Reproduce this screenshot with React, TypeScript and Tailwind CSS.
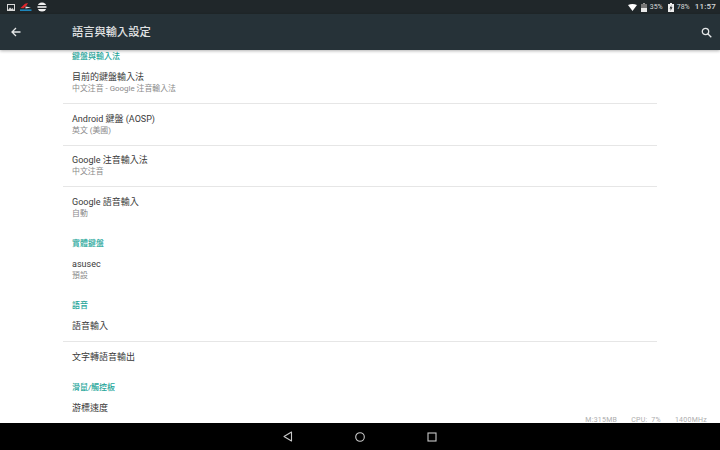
const cjk = { fontFamily: '"Roboto", "Noto Sans CJK TC", sans-serif' };

function Section({ text, first }: { text: string; first?: boolean }) {
  return (
    <div className={first ? "h-[12px] pt-[2px] px-[9px] flex items-center text-[8px] leading-[10px] font-medium text-[#26a69a]" : "h-[20px] pt-[10px] px-[9px] text-[8px] leading-[10px] font-medium text-[#26a69a]"}>
      {text}
    </div>
  );
}

function Row({ title, sub, divider, heightClass }: { title: string; sub?: string; divider?: boolean; heightClass?: string }) {
  return (
    <div className={divider ? "border-b border-[#e6e6e6]" : ""}>
      <div className={(heightClass ?? (sub ? "h-[41px]" : "h-[31px]")) + " px-[9px] flex flex-col justify-center gap-[2px]"}>
        <div className="text-[9px] leading-[10px] text-[#3a3a3a]">{title}</div>
        {sub && <div className="text-[7.9px] leading-[10px] text-[#8a8a8a]">{sub}</div>}
      </div>
    </div>
  );
}

export default function App() {
  return (
    <div style={cjk} className="relative w-[720px] h-[450px] overflow-hidden flex flex-col bg-white">
      <div className="h-[14px] shrink-0 bg-[#20272a] flex items-center justify-between pl-[7px] pr-[4px] text-[#d5d8d9]">
        <div className="flex items-center gap-[5px]">
          <svg width="8" height="7" viewBox="0 0 8 7">
            <rect x="0.5" y="0.5" width="7" height="6" fill="#20272a" stroke="#d8d8d8" />
            <path d="M1 6 L3 3.5 L4.5 5 L5.5 4 L7 6Z" fill="#d8d8d8" />
          </svg>
          <svg width="12" height="9" viewBox="0 0 12 9">
            <path d="M0.5 5 L5 0.8 L8 0 L6.5 2.4 L3.5 5.2Z" fill="#e0272d" />
            <path d="M5.5 3.5 L11 4.6 L5.5 5.4Z" fill="#e4e4e4" />
            <path d="M0 6.4 H11.5 V8 H0Z" fill="#1d86bb" />
          </svg>
          <svg width="10" height="10" viewBox="0 0 10 10">
            <circle cx="5" cy="5" r="4.6" fill="#f2f2f2" />
            <rect x="0" y="3" width="10" height="1.2" fill="#20272a" />
            <rect x="0" y="5.8" width="10" height="1.2" fill="#20272a" />
          </svg>
        </div>
        <div className="flex items-center text-[7px] leading-[10px]">
          <svg width="9" height="7" viewBox="0 0 9 7" className="mr-[4px]">
            <path d="M0 1 Q4.5 -1 9 1 L4.5 7Z" fill="#ffffff" />
          </svg>
          <svg width="6" height="9" viewBox="0 0 6 9" className="mr-[3px]">
            <rect x="2" y="0" width="2" height="1" fill="#999" />
            <rect x="0" y="1" width="6" height="8" fill="#777" />
            <rect x="0" y="5" width="6" height="4" fill="#e8e8e8" />
          </svg>
          <span className="mr-[5px]">35%</span>
          <svg width="6" height="9" viewBox="0 0 6 9" className="mr-[3px]">
            <rect x="2" y="0" width="2" height="1" fill="#eee" />
            <rect x="0" y="1" width="6" height="8" fill="#eee" />
            <path d="M3.5 2 L1.5 5.5 H2.8 L2.4 8 L4.5 4.2 H3.2Z" fill="#20272a" />
          </svg>
          <span className="mr-[5px]">78%</span>
          <span className="text-[8px] font-medium tracking-[0.2px]">11:57</span>
        </div>
      </div>

      <div className="relative z-10 h-[36px] shrink-0 bg-[#263238] flex items-center pl-[11px] pr-[8px] shadow-[0_1px_3px_rgba(0,0,0,0.3)]">
        <svg width="10" height="10" viewBox="0 0 10 10" fill="none" stroke="#e4e6e7" strokeWidth="1.3">
          <path d="M9.5 5 H1 M5 1 L1 5 L5 9" />
        </svg>
        <div className="ml-[51px] mt-[2px] flex-1 text-[11.25px] leading-[14px] font-medium text-[#e2e4e5]">語言與輸入設定</div>
        <svg width="11" height="11" viewBox="0 0 11 11" fill="none" stroke="#e4e6e7" strokeWidth="1.3">
          <circle cx="4.5" cy="4.5" r="3.2" />
          <path d="M7 7 L10.3 10.3" />
        </svg>
      </div>

      <div className="flex-1 min-h-0 overflow-hidden px-[63px]">
        <Section text="鍵盤與輸入法" first />
        <Row title="目前的鍵盤輸入法" sub="中文注音 - Google 注音輸入法" divider />
        <Row title="Android 鍵盤 (AOSP)" sub="英文 (美國)" divider />
        <Row title="Google 注音輸入法" sub="中文注音" divider heightClass="h-[40px]" />
        <Row title="Google 語音輸入" sub="自動" heightClass="h-[42px]" />
        <Section text="實體鍵盤" />
        <Row title="asusec" sub="預設" heightClass="h-[42px]" />
        <Section text="語音" />
        <Row title="語音輸入" divider heightClass="h-[30px]" />
        <Row title="文字轉語音輸出" heightClass="h-[31px] pb-[2px]" />
        <Section text="滑鼠/觸控板" />
        <Row title="游標速度" heightClass="h-[31px] pb-[2px]" />
      </div>

      <div className="h-[27px] shrink-0 bg-black flex items-center justify-center gap-[62px]">
        <svg width="10" height="11" viewBox="0 0 10 11" fill="none" stroke="#c9c9c9" strokeWidth="1.1">
          <path d="M1 5.5 L8.5 1 V10Z" strokeLinejoin="round" />
        </svg>
        <svg width="10" height="10" viewBox="0 0 10 10" fill="none" stroke="#c9c9c9" strokeWidth="1.1">
          <circle cx="5" cy="5" r="4.3" />
        </svg>
        <svg width="10" height="10" viewBox="0 0 10 10" fill="none" stroke="#c9c9c9" strokeWidth="1.1">
          <rect x="1" y="1" width="8" height="8" />
        </svg>
      </div>

      <div className="absolute right-[13px] top-[415px] flex gap-[14px] text-[7px] leading-[10px] tracking-[0.25px] text-[#adadad]">
        <span>M:315MB</span>
        <span>CPU:&nbsp;&nbsp;7%</span>
        <span>1400MHz</span>
      </div>
    </div>
  );
}
